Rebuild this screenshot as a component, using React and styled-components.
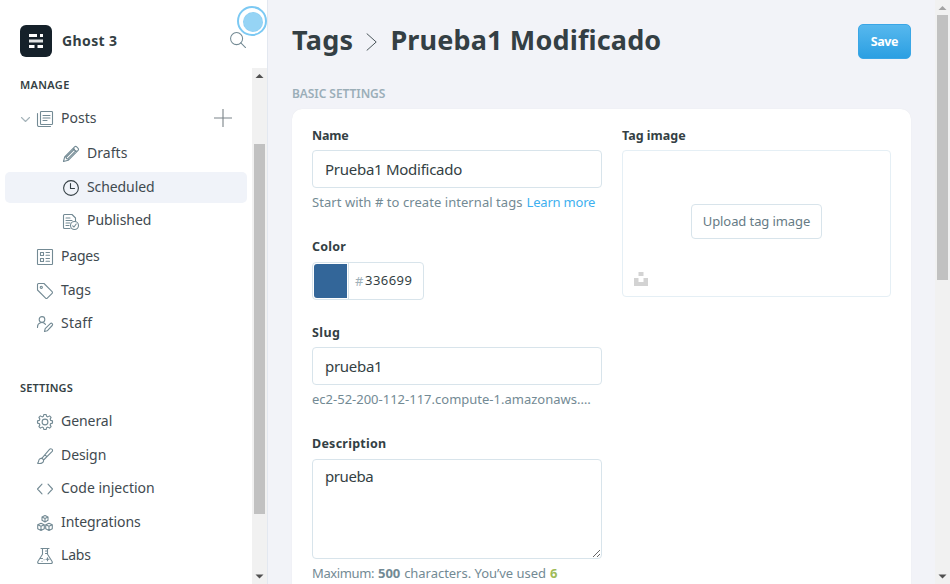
import React from 'react';
import styled, { createGlobalStyle, css } from 'styled-components';

const Global = createGlobalStyle`
  * { box-sizing: border-box; }
  html, body { margin: 0; height: 100%; overflow: hidden; }
  body { font-family: "Noto Sans", "Open Sans", sans-serif; color: #343f44; background: #f2f3f8; }
`;

const tracked = css`letter-spacing: ${(p) => p.$track || 0}px; white-space: nowrap;`;

const Page = styled.div`display: flex; width: 950px; height: 584px; overflow: hidden;`;

/* Sidebar */
const Sidebar = styled.aside`
  position: relative; display: flex; flex-direction: column; flex: none;
  width: 268px; background: #fff; border-right: 1px solid #e3e8f0;
`;
const SiteHeader = styled.header`
  display: flex; align-items: center; height: 68px; padding: 14px 21px 0 20px;
`;
const Logo = styled.div`
  display: grid; place-items: center; width: 32px; height: 32px; margin-right: 10px;
  background: #15212a; border-radius: 6px;
`;
const SiteName = styled.div`font-size: 14px; line-height: 20px; font-weight: 700; flex: 1; ${tracked}`;
const SearchIcon = styled.svg`display: block; width: 16px; height: 16px; margin-bottom: 2px;`;
const TourBeacon = styled.div`
  position: absolute; left: 237px; top: 6px; width: 30px; height: 30px; padding: 4px;
  border: 2px solid #7cc9f3; border-radius: 50%; background: #fff;
  &::after { content: ''; display: block; width: 18px; height: 18px; border-radius: 50%; background: #96d4f5; border: 1px dashed #8acdf2; }
`;
const SidebarBody = styled.div`display: flex; flex: 1; min-height: 0;`;
const Nav = styled.nav`flex: 1; padding: 9px 5px 0;`;
const SectionTitle = styled.h2`
  margin: ${(p) => p.$gap || 0}px 0 0 15px; font-size: 11px; line-height: 16px; font-weight: 600; ${tracked}
`;
const NavRow = styled.a`
  display: flex; align-items: center; height: 31px; margin-top: ${(p) => p.$gap}px;
  padding: 0 16px 0 ${(p) => (p.$nested ? 58 : 32)}px; border-radius: 5px;
  background: ${(p) => (p.$active ? '#f0f3f9' : 'transparent')};
  color: ${(p) => (p.$active ? '#343f44' : '#738a94')};
`;
const RowIcon = styled.svg`
  display: block; flex: none; width: 16px; height: 16px; margin-right: 8px; overflow: visible;
  fill: none; stroke: currentColor; stroke-width: 1.1; stroke-linecap: round; stroke-linejoin: round;
`;
const Caret = styled(RowIcon)`width: 9px; height: 5px; margin: 2px 7px 0 -16px; opacity: .65;`;
const PlusIcon = styled(RowIcon)`width: 18px; height: 18px; margin: 0 -1px 2px auto; stroke: #7b8489; stroke-linecap: butt;`;
const RowLabel = styled.span`
  margin-bottom: ${(p) => p.$lift || 2}px; font-size: 14px; line-height: 20px; color: #3f4a50; ${tracked}
`;

/* Scrollbar */
const Track = styled.div`
  display: flex; flex-direction: column; flex: none; width: 15px; background: #f1f1f1;
`;
const Arrow = styled.svg`display: block; width: 15px; height: 15px; fill: ${(p) => p.$color};`;
const Groove = styled.div`flex: 1; padding: ${(p) => p.$start}px 2px 0;`;
const Thumb = styled.div`height: ${(p) => p.$length}px; background: #c1c1c1;`;

/* Content */
const Content = styled.main`flex: 1; min-width: 0; padding: 24px 24px 0; overflow: hidden;`;
const TitleBar = styled.header`display: flex; align-items: center; height: 35px;`;
const Title = styled.h1`
  display: flex; align-items: center; flex: 1; margin: 0 0 3px; font-size: 27px; line-height: 34px; font-weight: 700;
`;
const Crumb = styled.span`${tracked}`;
const CrumbArrow = styled.svg`
  width: 11px; height: 18px; margin: 4px 13px 0 13px; fill: none; stroke: #4a555a; stroke-width: 1;
`;
const SaveButton = styled.button`
  width: 53px; height: 35px; padding: 0; border: 1px solid #3aa6e6; border-radius: 5px;
  background: linear-gradient(#57b8ee, #2b9fe2); color: #fff;
  font: 700 12.5px/20px "Noto Sans", sans-serif; ${tracked}
`;
const Overline = styled.h3`
  margin: 26px 0 7px; font-size: 12px; line-height: 17px; font-weight: 600; color: #9baeb8; ${tracked}
`;
const Card = styled.section`
  display: grid; grid-template-columns: 290px 269px; column-gap: 20px; height: 520px;
  padding: 19px 20px; background: #fff; border-radius: 10px; box-shadow: 0 0 1px rgba(0,0,0,.08);
`;
const Field = styled.div`margin-bottom: ${(p) => p.$gap || 29}px;`;
const Label = styled.label`
  display: block; margin-bottom: ${(p) => p.$gap || 6}px; font-size: 12.5px; line-height: 16px; font-weight: 700; ${tracked}
`;
const outlined = css`border: 1px solid #d8e4eb; border-radius: 4px; background: #fff;`;
const Input = styled.input`
  ${outlined} display: block; width: 100%; height: 38px; padding: 0 12px; outline: none; color: #343f44;
  font: 15px/20px "Noto Sans", sans-serif; ${tracked}
`;
const TextArea = styled.textarea`
  ${outlined} display: block; width: 100%; height: 100px; padding: 6px 12px; outline: none; color: #343f44;
  resize: vertical; font: 15px/20px "Noto Sans", sans-serif; ${tracked}
`;
const Hint = styled.p`
  display: flex; gap: 4px; margin: 6px 0 0; font-size: 13px; line-height: 16px; color: #738a94; white-space: nowrap;
`;
const HintPart = styled.span`
  font-weight: ${(p) => (p.$bold ? 700 : 400)}; color: ${(p) => p.$color || 'inherit'}; ${tracked}
`;
const ColorBox = styled.div`${outlined} display: flex; align-items: center; width: 112px; height: 38px; padding: 1px;`;
const Swatch = styled.div`width: 33px; height: 34px; background: #336699; border-radius: 3px 0 0 3px;`;
const HexBox = styled.div`
  display: flex; align-items: center; flex: 1; height: 36px; margin-left: 1px; padding: 0 0 2px 6px;
  border-left: 1px solid #d8e4eb; font-size: 13px; line-height: 16px; color: #343f44;
`;
const Hash = styled.span`width: 10px; padding-top: 1px; color: #9fb1ba;`;
const Uploader = styled.div`
  position: relative; display: grid; place-items: center; height: 147px; padding-bottom: 4px;
  border: 1px solid #e5eff5; border-radius: 4px;
`;
const UploadButton = styled.button`
  ${outlined} width: 131px; height: 35px; padding: 0 0 2px; color: #667b85;
  font: 13px/20px "Noto Sans", sans-serif; ${tracked}
`;
const Unsplash = styled.svg`position: absolute; left: 11px; bottom: 10px; width: 14px; height: 14px; fill: #d3d3d3;`;

const icons = {
  posts: <><rect x="3.5" y=".5" width="12" height="13" rx=".8" /><path d="M.5 2.5V14a1.5 1.5 0 0 0 1.5 1.5h11.5M6 4.5h7M6 7h7M6 9.5h4" /></>,
  drafts: <><path d="M.5 15.5l1.2-4.7L11.6.9c.6-.6 1.5-.6 2.1 0l1.4 1.4c.6.6.6 1.5 0 2.1L5.2 14.3zM1.7 10.8l1.5.3.2 1.5 1.6.2.2 1.5M10 2.5L13.5 6M3.4 11L11.5 3M5 12.7l8-8" /></>,
  scheduled: <><circle cx="8" cy="8" r="7.4" /><path d="M7.5 3.5v5h4" /></>,
  published: <><path d="M7 14.5H1.5a1 1 0 0 1-1-1v-12a1 1 0 0 1 1-1H9L12.5 4v3M3 4h4M3 6.5h6M3 9h4M3 11.5h3" /><circle cx="11.5" cy="11.5" r="4" /><path d="M9.7 11.8l1.3 1.2 2.2-3" /></>,
  pages: <><rect x=".5" y=".5" width="15" height="15" rx=".6" /><path d="M3.5 3.5h3v3h-3zM3.5 9.5h3v3h-3zM9 3.5h3.5M9 6.2h3.5M9 9.5h3.5M9 12.2h3.5" /></>,
  tags: <><path d="M.5 1.5a1 1 0 0 1 1-1H7L15.1 8.6a1.2 1.2 0 0 1 0 1.7l-4.8 4.8a1.2 1.2 0 0 1-1.7 0L.5 7z" /><circle cx="4.3" cy="4.3" r="1.1" /></>,
  staff: <><circle cx="5" cy="3.4" r="2.8" /><path d="M.5 11.5V11a4.4 4.4 0 0 1 8-2.6M7.5 15.5l.7-2.8L13.3 7.6a1.3 1.3 0 0 1 1.9 1.9L10.2 14.8z" /></>,
  general: <><circle cx="8" cy="8" r="2.9" /><path d="M6.4 2.3L6.9.5h2.2l.5 1.8 1.3.6 1.7-1 1.5 1.5-1 1.700.6 1.300 1.800.5v2.200l-1.800.5-.6 1.300 1 1.700-1.500 1.500-1.700-1-1.300.6-.5 1.800H6.900l-.5-1.800-1.300-.6-1.700 1-1.500-1.500 1-1.700-.6-1.300L.5 9.100V6.900l1.800-.5.6-1.300-1-1.700 1.500-1.500 1.700 1z" /></>,
  design: <><path d="M.5 15.200c1.500-.8.8-2.400 1.700-3.700.9-1.300 2.800-1.500 3.800-.4 1 1.200.6 2.900-.7 3.700-1.300.9-3.400.8-4.800.4zM4.800 10.400L12.500 1.400c1.300-1.500 4 0 2.700 2L6.600 12M8 6.900l1.900 1.700" /></>,
  code: <path d="M5 3.200L.5 8 5 12.800M11 3.200L15.500 8 11 12.800" />,
  integrations: <><path d="M8 .5l3 1.400v3.400L8 7 5 5.300V1.900zM5 2l3 1.500L11 2M8 3.500V7M4 8.300l3.300 1.500v4L4 15.500.700 13.800v-4zM.7 9.800L4 11.300l3.300-1.500M4 11.300v4.200M12 8.300l3.300 1.500v4L12 15.500l-3.300-1.700v-4zM8.700 9.800l3.300 1.500 3.300-1.500M12 11.300v4.200" /></>,
  labs: <><path d="M4 .5h8M5.500.5v5.800L.9 13.500c-.6 1 0 2 1.100 2h12c1.100 0 1.700-1 1.100-2L10.500 6.300V.5M3 10.500h2.500M8.500 3h2M8.500 5.500h2M10.500 9.800v3M9 11.300h3M5 13.300h.1M7 11.800h.1" /></>,
};

const contentLinks = [
  { icon: 'posts', text: 'Posts', gap: 10, expandable: true },
  { icon: 'drafts', text: 'Drafts', gap: 4, nested: true, track: 0.05 },
  { icon: 'scheduled', text: 'Scheduled', gap: 3, nested: true, active: true, track: -0.09 },
  { icon: 'published', text: 'Published', gap: 3, nested: true, track: -0.06, lift: 4 },
  { icon: 'pages', text: 'Pages', gap: 4, track: -0.2 },
  { icon: 'tags', text: 'Tags', gap: 3 },
  { icon: 'staff', text: 'Staff', gap: 2, track: 0.2 },
];
const settingLinks = [
  { icon: 'general', text: 'General', gap: 10, track: -0.06 },
  { icon: 'design', text: 'Design', gap: 3, track: -0.08 },
  { icon: 'code', text: 'Code injection', gap: 2 },
  { icon: 'integrations', text: 'Integrations', gap: 3, track: -0.1 },
  { icon: 'labs', text: 'Labs', gap: 2, track: -0.2 },
];

function NavLink({ item }) {
  return (
    <NavRow $gap={item.gap} $nested={item.nested} $active={item.active}>
      {item.expandable && <Caret viewBox="0 0 9 5"><path d="M.5.5l4 4 4-4" /></Caret>}
      <RowIcon viewBox="0 0 16 16">{icons[item.icon]}</RowIcon>
      <RowLabel $track={item.track} $lift={item.lift}>{item.text}</RowLabel>
      {item.expandable && <PlusIcon viewBox="0 0 18 18"><path d="M9 0v18M0 9h18" /></PlusIcon>}
    </NavRow>
  );
}

function Scrollbar({ start, length, atTop }) {
  return (
    <Track>
      <Arrow viewBox="0 0 15 15" $color={atTop ? '#a3a3a3' : '#505050'}><path d="M3.5 10h8L7.5 6z" /></Arrow>
      <Groove $start={start}><Thumb $length={length} /></Groove>
      <Arrow viewBox="0 0 15 15" $color="#505050"><path d="M3.5 5.5h8L7.5 9.5z" /></Arrow>
    </Track>
  );
}

export default function App() {
  return (
    <Page>
      <Global />
      <Sidebar>
        <SiteHeader>
          <Logo>
            <svg width="14" height="14" viewBox="0 0 14 14" fill="#fff">
              <path d="M0 0h8v3H0zM11 0h3v3h-3zM0 11h5.5v3H0zM8.5 11H14v3H8.500z" />
              <path d="M0 5.500h14v3H0z" fill="#dfe2e3" />
            </svg>
          </Logo>
          <SiteName $track={0.38}>Ghost 3</SiteName>
          <SearchIcon viewBox="0 0 17 17" fill="none" stroke="#738a94" strokeWidth="1.1" strokeLinecap="round">
            <circle cx="7" cy="7" r="6.400" /><path d="M11.500 11.500l5 5" />
          </SearchIcon>
        </SiteHeader>
        <SidebarBody>
          <Nav>
            <SectionTitle $track={0.34}>MANAGE</SectionTitle>
            {contentLinks.map((item) => <NavLink key={item.text} item={item} />)}
            <SectionTitle $gap={41} $track={0.14}>SETTINGS</SectionTitle>
            {settingLinks.map((item) => <NavLink key={item.text} item={item} />)}
          </Nav>
          <Scrollbar start={61} length={370} />
        </SidebarBody>
        <TourBeacon />
      </Sidebar>
      <Content>
        <TitleBar>
          <Title>
            <Crumb $track={0.3}>Tags</Crumb>
            <CrumbArrow viewBox="0 0 11 18"><path d="M.7.5L10.2 9 .7 17.5" /></CrumbArrow>
            <Crumb $track={0.15}>Prueba1 Modificado</Crumb>
          </Title>
          <SaveButton $track={-0.4}>Save</SaveButton>
        </TitleBar>
        <Overline $track={-0.07}>BASIC SETTINGS</Overline>
        <Card>
          <div>
            <Field>
              <Label $track={-0.18}>Name</Label>
              <Input $track={-0.27} defaultValue="Prueba1 Modificado" />
              <Hint>
                <HintPart $track={0.06}>Start with # to create internal tags</HintPart>
                <HintPart $track={-0.2} $color="#3eb0ef">Learn more</HintPart>
              </Hint>
            </Field>
            <Field $gap={25}>
              <Label $gap={7} $track={0.2}>Color</Label>
              <ColorBox>
                <Swatch />
                <HexBox><Hash>#</Hash><HintPart $track={0.46}>336699</HintPart></HexBox>
              </ColorBox>
            </Field>
            <Field>
              <Label $track={0.4}>Slug</Label>
              <Input $track={-0.3} defaultValue="prueba1" />
              <Hint><HintPart>ec2-52-200-112-117.compute-1.amazonaws.…</HintPart></Hint>
            </Field>
            <Field>
              <Label $gap={7} $track={0.25}>Description</Label>
              <TextArea $track={-0.42} defaultValue="prueba" />
              <Hint>
                <HintPart $track={-0.38}>Maximum:</HintPart>
                <HintPart $bold $track={-0.1}>500</HintPart>
                <HintPart $track={-0.03}>characters. You’ve used</HintPart>
                <HintPart $bold $color="#9fbb58">6</HintPart>
              </Hint>
            </Field>
          </div>
          <div>
            <Label>Tag image</Label>
            <Uploader>
              <UploadButton $track={-0.09}>Upload tag image</UploadButton>
              <Unsplash viewBox="0 0 14 14"><path d="M4.5 0h5v4h-5zM0 6h4.5v4h5V6H14v8H0z" /></Unsplash>
            </Uploader>
          </div>
        </Card>
      </Content>
      <Scrollbar start={0} length={265} atTop />
    </Page>
  );
}
